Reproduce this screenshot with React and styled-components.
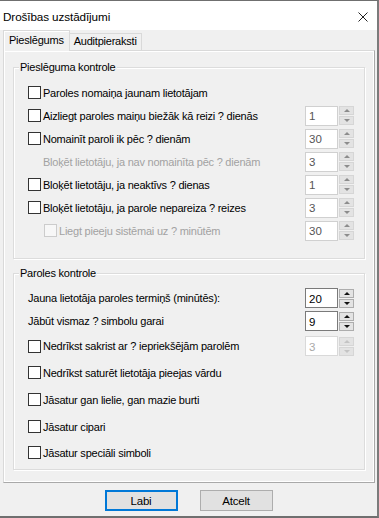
import React from "react";
import styled, { createGlobalStyle } from "styled-components";

const GlobalStyle = createGlobalStyle`
	html, body {
		margin: 0;
		padding: 0;
		background: #f0f0f0;
	}
	body {
		font-family: "Liberation Sans", Arial, sans-serif;
		font-size: 11px;
		letter-spacing: -0.22px;
		color: #000;
	}
`;

const Window = styled.div`
	width: 379px;
	height: 518px;
	box-sizing: border-box;
	display: flex;
	flex-direction: column;
	background: #f0f0f0;
	border-top: 1px solid #6f6f6f;
	border-right: 2px solid #7b7b7b;
	border-bottom: 2px solid #6f6f6f;
`;

const TitleBar = styled.div`
	height: 29px;
	box-sizing: border-box;
	padding: 2px 9px 0 3px;
	display: flex;
	align-items: center;
	justify-content: space-between;
	background: #fff;
	font-size: 11.7px;
	letter-spacing: -0.1px;
`;

const CloseIcon = () => (
	<svg width="10" height="10" viewBox="0 0 10 10">
		<path d="M0.5 0.5 L9.5 9.5 M9.5 0.5 L0.5 9.5" stroke="#222" strokeWidth="1" fill="none" />
	</svg>
);

const TabStrip = styled.div`
	height: 20px;
	display: flex;
	align-items: flex-end;
	padding-left: 3px;
	position: relative;
	z-index: 1;
`;

const Tab = styled.div`
	box-sizing: border-box;
	height: ${(p) => (p.$active ? "21px" : "17px")};
	margin-bottom: ${(p) => (p.$active ? "-1px" : "0")};
	padding: ${(p) => (p.$active ? "3px 5px 0 5px" : "1px 4px 0 4px")};
	border: 1px solid #d9d9d9;
	border-bottom: none;
	border-left: ${(p) => (p.$active ? "1px solid #d9d9d9" : "none")};
	background: #f0f0f0;
	box-shadow: ${(p) => (p.$active ? "inset 1px 1px 0 #fff" : "none")};
	white-space: nowrap;
`;

const Panel = styled.div`
	margin: 0 2px 0 3px;
	padding: 16px 9px 12px 9px;
	border: 1px solid #a9a9a9;
	border-top-color: #d9d9d9;
	border-left-color: #d9d9d9;
	box-shadow: inset 1px 1px 0 #fff, inset -1px -1px 0 #fff;
	display: flex;
	flex-direction: column;
	gap: 14px;
`;

const Group = styled.div`
	position: relative;
	box-sizing: border-box;
	height: ${(p) => p.$height}px;
	padding: 13px 10px 0 14px;
	border: 1px solid #dcdcdc;
	box-shadow: 1px 1px 0 #fff, inset 1px 1px 0 #fff;
`;

const Legend = styled.span`
	position: absolute;
	top: -7px;
	left: 5px;
	padding: 0 1px;
	line-height: 13px;
	background: #f0f0f0;
`;

const Row = styled.div`
	height: ${(p) => p.$h || 23}px;
	display: flex;
	align-items: center;
	padding-left: ${(p) => p.$indent || 0}px;
`;

const Label = styled.label`
	flex: 1;
	display: flex;
	align-items: center;
	gap: 2px;
	color: ${(p) => (p.$disabled ? "#a2a2a2" : "#000")};
	white-space: nowrap;
`;

const Box = styled.span`
	width: 13px;
	height: 13px;
	box-sizing: border-box;
	flex: none;
	border: 1px solid ${(p) => (p.$disabled ? "#cccccc" : "#333")};
	background: ${(p) => (p.$disabled ? "#f7f7f7" : "#fff")};
`;

const Spinner = styled.div`
	display: flex;
	align-items: center;
	gap: 1px;
`;

const Field = styled.div`
	width: 33px;
	height: 20px;
	box-sizing: border-box;
	padding: 1px 0 0 3px;
	display: flex;
	align-items: center;
	background: #fff;
	border: 1px solid ${(p) => (p.$tone === "active" ? "#7a7a7a" : p.$tone === "off" ? "#d9d9d9" : "#d0d0d0")};
	color: ${(p) => (p.$tone === "active" ? "#000" : p.$tone === "off" ? "#a8a8a8" : "#555")};
	font-size: 11.5px;
	letter-spacing: 0;
`;

const Arrows = styled.div`
	display: flex;
	flex-direction: column;
	gap: 1px;
`;

const Arrow = styled.div`
	width: 15px;
	height: 9px;
	box-sizing: border-box;
	display: flex;
	align-items: center;
	justify-content: center;
	background: #e3e3e3;
	border: 1px solid ${(p) => (p.$tone === "active" ? "#adadad" : "#d6d6d6")};
	&::after {
		content: "";
		border-left: 3px solid transparent;
		border-right: 3px solid transparent;
		${(p) => (p.$down ? "border-top" : "border-bottom")}: 3px solid
			${(p) => (p.$tone === "active" ? "#111" : p.$tone === "off" ? "#c4c4c4" : "#8c8c8c")};
	}
`;

const Spin = ({ value, tone }) => (
	<Spinner>
		<Field $tone={tone}>{value}</Field>
		<Arrows>
			<Arrow $tone={tone} />
			<Arrow $tone={tone} $down />
		</Arrows>
	</Spinner>
);

const Footer = styled.div`
	flex: 1;
	display: flex;
	justify-content: center;
	align-items: flex-start;
	gap: 22px;
	padding-top: 7px;
`;

const Button = styled.button`
	width: 73px;
	height: 21px;
	box-sizing: border-box;
	padding: 0;
	font-family: inherit;
	font-size: 11.5px;
	letter-spacing: inherit;
	color: #000;
	background: #e1e1e1;
	border: ${(p) => (p.$primary ? "2px solid #0078d7" : "1px solid #adadad")};
`;

const CheckRow = ({ text, spin, tone, disabled, indent, h }) => (
	<Row $indent={indent} $h={h}>
		<Label $disabled={disabled}>
			<Box $disabled={disabled} />
			{text}
		</Label>
		{spin && <Spin value={spin} tone={tone} />}
	</Row>
);

export default function App() {
	return (
		<>
			<GlobalStyle />
			<Window>
				<TitleBar>
					<span>Drošības uzstādījumi</span>
					<CloseIcon />
				</TitleBar>
				<TabStrip>
					<Tab $active>Pieslēgums</Tab>
					<Tab>Auditpieraksti</Tab>
				</TabStrip>
				<Panel>
					<Group $height={192}>
						<Legend>Pieslēguma kontrole</Legend>
						<CheckRow text="Paroles nomaiņa jaunam lietotājam" />
						<CheckRow text="Aizliegt paroles maiņu biežāk kā reizi ? dienās" spin="1" />
						<CheckRow text="Nomainīt paroli ik pēc ? dienām" spin="30" />
						<Row $indent={15}>
							<Label $disabled>Bloķēt lietotāju, ja nav nomainīta pēc ? dienām</Label>
							<Spin value="3" />
						</Row>
						<CheckRow text="Bloķēt lietotāju, ja neaktīvs ? dienas" spin="1" />
						<CheckRow text="Bloķēt lietotāju, ja parole nepareiza ? reizes" spin="3" />
						<CheckRow text="Liegt pieeju sistēmai uz ? minūtēm" spin="30" disabled indent={16} />
					</Group>
					<Group $height={197}>
						<Legend>Paroles kontrole</Legend>
						<Row $h={22} $indent={-1}>
							<Label>Jauna lietotāja paroles termiņš (minūtēs):</Label>
							<Spin value="20" tone="active" />
						</Row>
						<Row $h={24} $indent={-1}>
							<Label>Jābūt vismaz ? simbolu garai</Label>
							<Spin value="9" tone="active" />
						</Row>
						<CheckRow h={26} text="Nedrīkst sakrist ar ? iepriekšējām parolēm" spin="3" tone="off" />
						<CheckRow h={27} text="Nedrīkst saturēt lietotāja pieejas vārdu" />
						<CheckRow h={27} text="Jāsatur gan lielie, gan mazie burti" />
						<CheckRow h={27} text="Jāsatur cipari" />
						<CheckRow h={25} text="Jāsatur speciāli simboli" />
					</Group>
				</Panel>
				<Footer>
					<Button $primary>Labi</Button>
					<Button>Atcelt</Button>
				</Footer>
			</Window>
		</>
	);
}
